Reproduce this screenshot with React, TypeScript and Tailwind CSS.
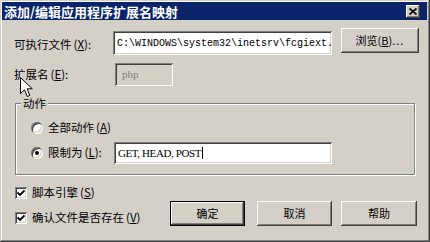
import React from 'react';

const FONT = "font-['Noto_Sans_CJK_SC','Liberation_Sans',sans-serif]";
const RAISED =
  'bg-[#d4d0c8] shadow-[inset_-1px_-1px_#404040,inset_1px_1px_#ffffff,inset_-2px_-2px_#808080,inset_2px_2px_#d4d0c8]';
const SUNKEN =
  'shadow-[inset_1px_1px_#808080,inset_-1px_-1px_#ffffff,inset_2px_2px_#404040,inset_-2px_-2px_#d4d0c8]';

// label with hot key, e.g. 可执行文件(X):
function Hot({ text, k, colon }: { text: string; k: string; colon?: boolean }) {
  return (
    <span className="whitespace-nowrap">
      {text}
      <span className="ml-[2px]">
        (<u>{k}</u>){colon ? ':' : ''}
      </span>
    </span>
  );
}

function Btn({ label, hot, width, isDefault }: { label: string; hot?: string; width: string; isDefault?: boolean }) {
  return (
    <div
      className={`${width} h-[25px] flex items-center justify-center text-[11px] text-black ${RAISED} ${
        isDefault ? 'border border-black' : ''
      }`}
    >
      <span>
        {label}
        {hot && (
          <>
            (<u>{hot}</u>)<span className="tracking-[1px]">...</span>
          </>
        )}
      </span>
    </div>
  );
}

function Radio({ checked }: { checked?: boolean }) {
  return (
    <div className={`w-[12px] h-[12px] rounded-full bg-white flex items-center justify-center ${SUNKEN}`}>
      {checked && <div className="w-[4px] h-[4px] rounded-full bg-black" />}
    </div>
  );
}

function Check() {
  return (
    <div className={`w-[12px] h-[12px] bg-white flex items-center justify-center ${SUNKEN}`}>
      <svg width="8" height="8" viewBox="0 0 8 8">
        <path d="M0.5 3.5 L3 6 L7.5 1.5" stroke="#000" strokeWidth="1.8" fill="none" />
      </svg>
    </div>
  );
}

function Cursor() {
  return (
    <svg className="absolute left-[18px] top-[57px]" width="14" height="21" viewBox="0 0 14 21">
      <path
        d="M0.5 0.5 L0.5 16.5 L4.5 12.8 L7.3 19.5 L9.8 18.4 L7.1 11.8 L12.3 11.8 Z"
        fill="#fff"
        stroke="#000"
        strokeWidth="1"
      />
    </svg>
  );
}

export default function App() {
  return (
    <div
      className={`${FONT} w-[430px] h-[242px] bg-[#d4d0c8] p-[2px] flex flex-col shadow-[inset_-1px_-1px_#404040,inset_1px_1px_#d4d0c8,inset_-2px_-2px_#808080,inset_2px_2px_#ffffff] overflow-hidden`}
    >
      {/* title bar */}
      <div className="h-[18px] mr-[1px] bg-[#0a246a] flex items-center justify-between pl-[2px] pr-[7px]">
        <span className="text-white font-bold text-[13px] leading-none">添加/编辑应用程序扩展名映射</span>
        <div className={`w-[14px] h-[13px] flex items-center justify-center ${RAISED}`}>
          <svg width="8" height="7" viewBox="0 0 8 7">
            <path d="M0.5 0.5 L7.5 6.5 M7.5 0.5 L0.5 6.5" stroke="#000" strokeWidth="1.7" />
          </svg>
        </div>
      </div>

      <div className="relative flex-1 pl-[12px] pr-[9px] text-[11.5px] text-black">
        {/* executable */}
        <div className="flex items-start mt-[8px]">
          <span className="w-[99px] mt-[8px]">
            <Hot text="可执行文件" k="X" colon />
          </span>
          <div
            className={`w-[219px] h-[24px] mt-[3px] bg-white flex items-center pl-[4px] overflow-hidden whitespace-nowrap font-['Liberation_Mono',monospace] text-[10px] ${SUNKEN}`}
          >
            C:\WINDOWS\system32\inetsrv\fcgiext.
          </div>
          <div className="ml-[9px]">
            <Btn label="浏览" hot="B" width="w-[78px]" />
          </div>
        </div>

        {/* extension */}
        <div className="flex items-center mt-[8px]">
          <span className="w-[101px]">
            <Hot text="扩展名" k="E" colon />
          </span>
          <div
            className={`w-[58px] h-[23px] flex items-center pl-[7px] text-[#808080] font-['Liberation_Serif',serif] text-[11px] ${SUNKEN}`}
          >
            php
          </div>
        </div>

        {/* action group */}
        <div className="relative mt-[17px] ml-[1px] w-[400px] h-[72px] border border-[#808080] shadow-[inset_1px_1px_#ffffff,1px_1px_#ffffff]">
          <span className="absolute left-[5px] top-[-9px] px-[2px] bg-[#d4d0c8] leading-[16px]">动作</span>
          <div className="flex flex-col pl-[15px] pt-[18px]">
            <div className="flex items-center gap-[5px] h-[12px]">
              <Radio />
              <Hot text="全部动作" k="A" />
            </div>
            <div className="flex items-center mt-[8px]">
              <div className="flex items-center gap-[5px] w-[83px]">
                <Radio checked />
                <Hot text="限制为" k="L" colon />
              </div>
              <div
                className={`w-[218px] h-[22px] bg-white flex items-center pl-[4px] font-['Liberation_Serif',serif] text-[11px] tracking-[-0.4px] ${SUNKEN}`}
              >
                GET, HEAD, POST
                <span className="ml-[1px] w-[1px] h-[12px] bg-black" />
              </div>
            </div>
          </div>
        </div>

        {/* bottom */}
        <div className="flex items-start mt-[12px] ml-[1px]">
          <div className="flex flex-col gap-[13px] w-[155px]">
            <div className="flex items-center gap-[5px] h-[12px]">
              <Check />
              <Hot text="脚本引擎" k="S" />
            </div>
            <div className="flex items-center gap-[5px] h-[12px]">
              <Check />
              <Hot text="确认文件是否存在" k="V" />
            </div>
          </div>
          <div className="flex mt-[14px]">
            <Btn label="确定" width="w-[75px]" isDefault />
            <div className="ml-[12px]">
              <Btn label="取消" width="w-[75px]" />
            </div>
            <div className="ml-[9px]">
              <Btn label="帮助" width="w-[76px]" />
            </div>
          </div>
        </div>

        <Cursor />
      </div>
    </div>
  );
}
